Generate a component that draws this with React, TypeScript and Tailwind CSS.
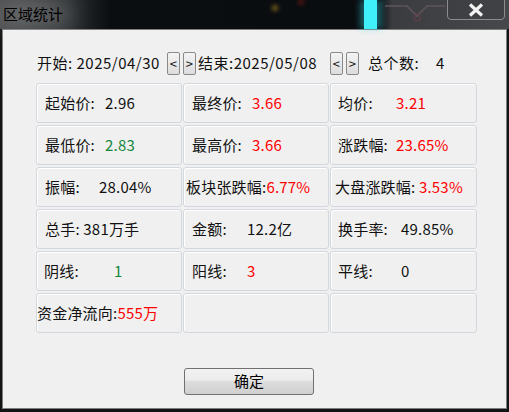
import React from "react";

const FONT = { fontFamily: '"Microsoft YaHei", "Noto Sans CJK SC", "Noto Sans", sans-serif' };

type Cell = {
  label: string;
  value?: string;
  color?: string;
  labelW?: string;
  pad?: string;
};

const RED = "text-[#ff0000]";
const GREEN = "text-[#13873a]";

const rows: Cell[][] = [
  [
    { label: "起始价:", value: "2.96", labelW: "w-[60px]" },
    { label: "最终价:", value: "3.66", color: RED, labelW: "w-[60px]" },
    { label: "均价:", value: "3.21", color: RED, labelW: "w-[58px]", pad: "pl-[7px]" },
  ],
  [
    { label: "最低价:", value: "2.83", color: GREEN, labelW: "w-[60px]" },
    { label: "最高价:", value: "3.66", color: RED, labelW: "w-[60px]" },
    { label: "涨跌幅:", value: "23.65%", color: RED, labelW: "w-[58px]", pad: "pl-[7px]" },
  ],
  [
    { label: "振幅:", value: "28.04%", labelW: "w-[54px]" },
    { label: "板块张跌幅:", value: "6.77%", color: RED, pad: "pl-[2px]" },
    { label: "大盘涨跌幅: ", value: "3.53%", color: RED, pad: "pl-[4px]" },
  ],
  [
    { label: "总手: ", value: "381万手" },
    { label: "金额:", value: "12.2亿", labelW: "w-[55px]" },
    { label: "换手率:", value: "49.85%", labelW: "w-[63px]", pad: "pl-[7px]" },
  ],
  [
    { label: "阴线:", value: "1", color: GREEN, labelW: "w-[70px]", pad: "pl-[7px]" },
    { label: "阳线:", value: "3", color: RED, labelW: "w-[55px]" },
    { label: "平线:", value: "0", labelW: "w-[63px]", pad: "pl-[7px]" },
  ],
  [{ label: "资金净流向:", value: "555万", color: RED, pad: "pl-0" }, { label: "" }, { label: "" }],
];

function NavBtn({ ch }: { ch: string }) {
  return (
    <div className="w-[13px] h-[23px] rounded-[2px] border border-[#8a8a8a] bg-[linear-gradient(#f4f4f4,#dcdcdc)] flex items-center justify-center text-[13px] leading-none text-[#111]">
      {ch}
    </div>
  );
}

export default function App() {
  return (
    <div className="w-[509px] h-[412px] bg-[#111315] flex flex-col overflow-hidden" style={FONT}>
      {/* title bar */}
      <div className="relative h-[29px] shrink-0 bg-[linear-gradient(to_right,#4a4c4e_0px,#2c2f31_70px,#0b0e11_110px,#0a0d10_355px,#0a0d10_380px,#3a3c40_392px,#47484c_509px)]">
        <div className="absolute left-[0px] top-[2px] w-[72px] h-[24px] rounded-full bg-white/25 blur-md" />
        <div className="absolute left-[272px] top-[5px] w-[6px] h-[6px] rounded-full bg-[#7a6420] blur-[2px]" />
        <div className="absolute left-[298px] top-[0px] w-[6px] h-[4px] rounded-full bg-[#701818] blur-[2px]" />
        <div className="absolute left-[360px] top-0 w-[22px] h-[29px] bg-[#2fd8e8]/40 blur-[3px]" />
        <div className="absolute left-[364px] top-0 w-[13px] h-[29px] bg-[#3ff0fa]" />
        <svg className="absolute left-[385px] top-0" width="60" height="29" viewBox="0 0 60 29">
          <path d="M0 6 L22 6 L32 16 L42 6 L60 6" stroke="#6b5a60" strokeWidth="2" fill="none" opacity="0.6" />
          <circle cx="32" cy="18" r="3" stroke="#6a4048" strokeWidth="1.5" fill="none" opacity="0.6" />
        </svg>
        <span className="relative ml-[3px] leading-[29px] text-[15px] text-black -top-[1px]">区域统计</span>
        <div className="absolute left-[447px] top-[-4px] w-[58px] h-[24px] rounded-[4px] border border-[#8c8c8c] bg-[#3d3e42]/70 flex items-center justify-center pt-[3px]">
          <svg width="16" height="14" viewBox="0 0 16 14">
            <path d="M2 1.5 L14 12.5 M14 1.5 L2 12.5" stroke="#f2f2f2" strokeWidth="3.2" />
          </svg>
        </div>
      </div>

      {/* client area */}
      <div className="mx-[2px] h-[380px] bg-[#f0f0f0] border border-[#7e7e7e] text-[15px] text-[#111] flex flex-col">
        <div className="flex items-center h-[23px] mt-[22px] pl-[34px] tracking-[0.5px]">
          <span className="w-[130px] whitespace-pre">开始: 2025/04/30</span>
          <NavBtn ch="<" />
          <div className="w-[3px]" />
          <NavBtn ch=">" />
          <span className="w-[134px] pl-[2px] whitespace-pre">结束:2025/05/08</span>
          <NavBtn ch="<" />
          <div className="w-[3px]" />
          <NavBtn ch=">" />
          <span className="w-[77px] pl-[9px] whitespace-pre">总个数:</span>
          <span>4</span>
        </div>

        <div className="ml-[33px] mt-[8px] grid grid-cols-[146px_146px_147px] auto-rows-[40px] gap-x-[1px] gap-y-[2px] w-[441px]">
          {rows.flat().map((c, i) => (
            <div
              key={i}
              className={`flex items-center rounded-[3px] border border-[#d3d8de] shadow-[inset_1px_1px_0_#ffffff] whitespace-pre tracking-[0.2px] ${c.pad ?? "pl-[8px]"}`}
            >
              {c.label && <span className={`whitespace-pre ${c.labelW ?? ""}`}>{c.label}</span>}
              {c.value && <span className={c.color ?? ""}>{c.value}</span>}
            </div>
          ))}
        </div>

        <div className="ml-[181px] mt-[35px] w-[130px] h-[27px] rounded-[3px] border border-[#707070] bg-[linear-gradient(#f2f2f2_0%,#ebebeb_45%,#dddddd_50%,#cfcfcf_100%)] flex items-center justify-center text-[15px] text-black">
          确定
        </div>
      </div>
    </div>
  );
}
